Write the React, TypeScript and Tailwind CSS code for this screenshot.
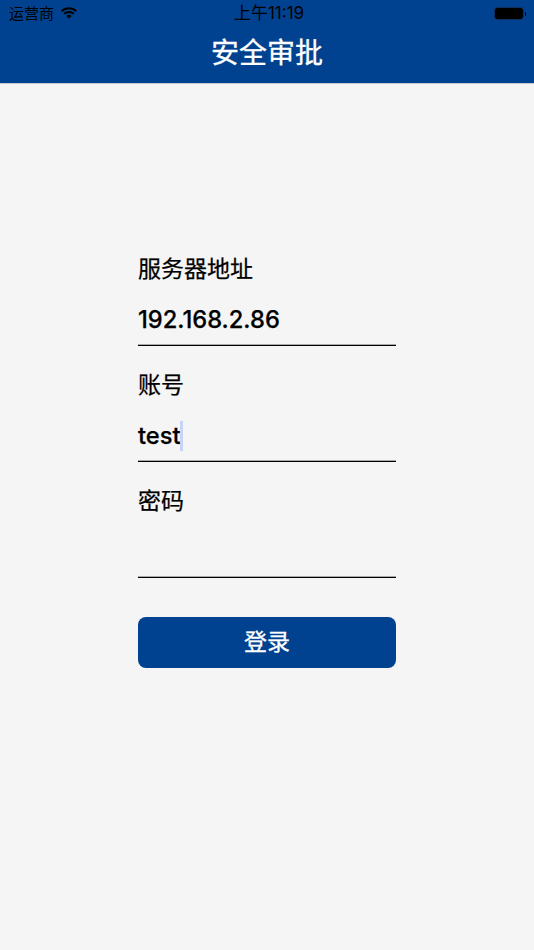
import React from 'react';

const cjk = 'font-["Inter","Noto_Sans_CJK_SC",sans-serif]';

const Field: React.FC<{ label: string; value?: string; caret?: boolean }> = ({ label, value, caret }) => (
  <div className="h-[116px] flex flex-col">
    <div className="h-[58px] pt-[22px] text-[23px] leading-[34px] text-black [-webkit-text-stroke:0.25px_black]">{label}</div>
    <div className="h-[58px] border-b border-black shadow-[inset_0_-1px_0_#a8a8a8] flex items-center pt-[6px] text-[23.7px] font-medium text-black [-webkit-text-stroke:0.25px_black]">
      <span>{value}</span>
      {caret && <span className="w-[3px] h-[30px] bg-[#c6d4f5] -ml-[1px]" />}
    </div>
  </div>
);

const App: React.FC = () => {
  return (
    <div className={`h-[950px] bg-[#f5f5f5] flex flex-col ${cjk}`}>
      {/* Header */}
      <header className="h-[84px] bg-[#00428f] border-b border-[#c4c6c9] flex flex-col">
        <div className="h-[27px] pl-[9px] pr-[8px] flex items-center text-black">
          <span className="text-[15px] leading-none">运营商</span>
          <svg className="ml-[7px] mb-[2px]" width="16" height="12" viewBox="0 0 16 12">
            <path d="M0.7 4.2 A10.6 10.6 0 0 1 15.3 4.2" fill="none" stroke="#000" strokeWidth="2" />
            <path d="M3.2 6.8 A7 7 0 0 1 12.8 6.8" fill="none" stroke="#000" strokeWidth="2" />
            <path d="M5.4 9 L8 11.6 L10.6 9 A3.8 3.8 0 0 0 5.4 9 Z" fill="#000" />
          </svg>
          <span className="flex-1 text-center text-[17px] leading-none pr-[34px]">上午11:19</span>
          <div className="flex items-center">
            <div className="w-[28px] h-[11px] bg-black rounded-[2px] outline outline-[#10305f]" />
            <div className="ml-[2px] w-[1px] h-[4px] bg-black" />
          </div>
        </div>
        <div className="h-[52px] flex items-center justify-center text-white text-[28px] leading-none [-webkit-text-stroke:0.3px_white]">安全审批</div>
      </header>

      {/* Form */}
      <main className="w-[258px] mx-auto pt-[146px]">
        <Field label="服务器地址" value="192.168.2.86" />
        <Field label="账号" value="test" caret />
        <Field label="密码" />
        <button className="mt-[39px] w-full h-[51px] bg-[#00428f] rounded-[8px] text-white text-[23px] [-webkit-text-stroke:0.3px_white]">登录</button>
      </main>
    </div>
  );
};

export default App;
